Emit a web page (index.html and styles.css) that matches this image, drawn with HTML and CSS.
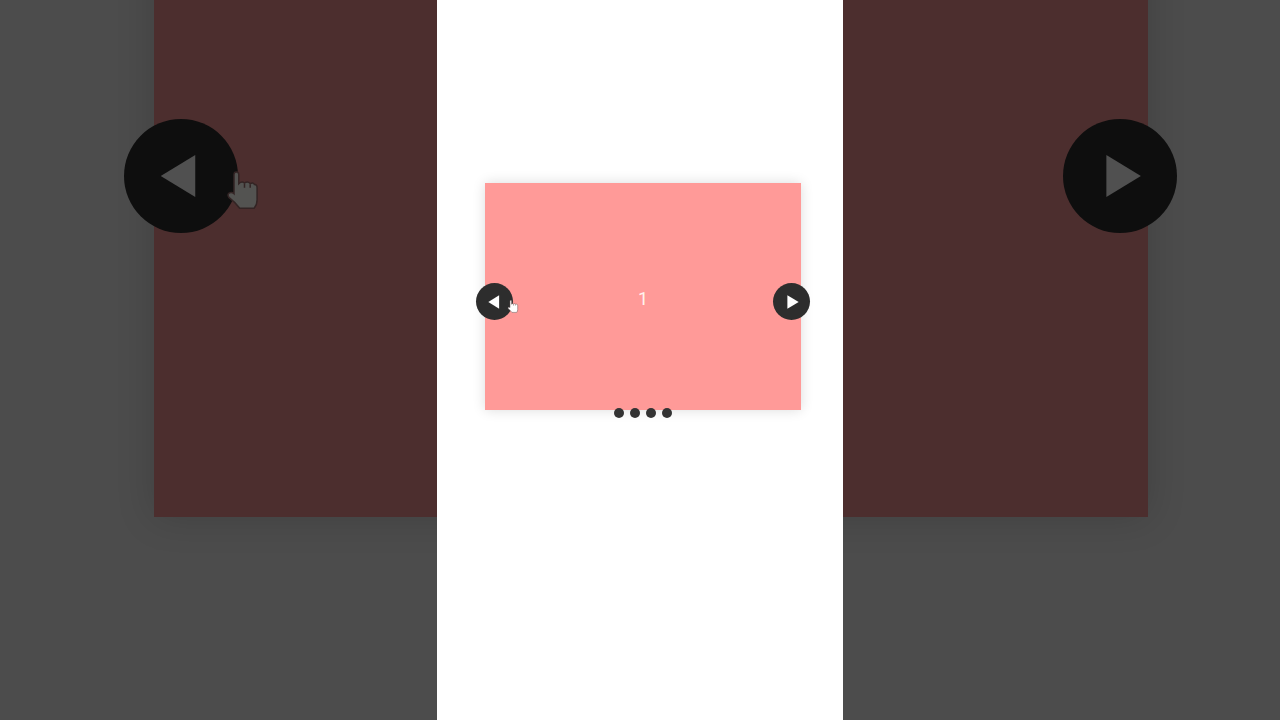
FILE: index.html
```html
<!DOCTYPE html>
<html lang="en">
<head>
  <meta charset="UTF-8">
  <meta name="viewport" content="width=device-width, initial-scale=1">
  <title>Carousel</title>
  <link rel="stylesheet" href="styles.css">
</head>
<body>
  <!-- dimmed large carousel behind the phone panel -->
  <div class="backdrop" aria-hidden="true">
    <div class="carousel carousel-large">
      <div class="slide"></div>
      <button class="arrow prev" tabindex="-1">
        <svg viewBox="0 0 36 36"><path d="M11.6 18 22.5 11.4V24.6Z"/></svg>
      </button>
      <button class="arrow next" tabindex="-1">
        <svg viewBox="0 0 36 36"><path d="M24.6 18 13.7 11.4V24.6Z"/></svg>
      </button>
      <svg class="hand" viewBox="0 0 12 16">
        <path d="M3 9.6V3.2Q3 2.3 3.8 2.3T4.6 3.2V6.2Q5.6 5.2 6.5 6 7.6 5.2 8.4 6.2 9.4 5.6 9.8 6.5 10.7 6.4 10.7 7.6V11.6Q10.7 13.2 9.7 14.4H4.9Q3.6 12.6 1.3 10.8 .6 9.8 1.5 9.3 2.3 9 3 9.6Z"/>
        <path d="M6.5 6.2V7.6M8.4 6.4V7.6"/>
      </svg>
    </div>
  </div>

  <main class="panel">
    <div class="carousel">
      <div class="slide">1</div>
      <button class="arrow prev" aria-label="Previous">
        <svg viewBox="0 0 36 36"><path d="M12 18.4 22.5 11.8V25Z"/></svg>
      </button>
      <button class="arrow next" aria-label="Next">
        <svg viewBox="0 0 36 36"><path d="M25 18.4 14 11.8V25Z"/></svg>
      </button>
      <div class="dots">
        <button class="dot" aria-label="Slide 1"></button>
        <button class="dot" aria-label="Slide 2"></button>
        <button class="dot" aria-label="Slide 3"></button>
        <button class="dot" aria-label="Slide 4"></button>
      </div>
      <svg class="hand" viewBox="0 0 12 16">
        <path d="M3 9.6V3.2Q3 2.3 3.8 2.3T4.6 3.2V6.2Q5.6 5.2 6.5 6 7.6 5.2 8.4 6.2 9.4 5.6 9.8 6.5 10.7 6.4 10.7 7.6V11.6Q10.7 13.2 9.7 14.4H4.9Q3.6 12.6 1.3 10.8 .6 9.8 1.5 9.3 2.3 9 3 9.6Z"/>
        <path d="M6.5 6.2V7.6M8.4 6.4V7.6"/>
      </svg>
    </div>
  </main>
</body>
</html>
```
FILE: styles.css
```css
* {
  box-sizing: border-box;
}
body {
  margin: 0;
  min-height: 100vh;
  display: flex;
  justify-content: center;
  position: relative;
  overflow: hidden;
  background: #4c4c4c;
  font-family: Roboto, Arial, sans-serif;
}

/* dimmed copy */
.backdrop {
  position: absolute;
  inset: 0;
  display: flex;
  justify-content: center;
  align-items: flex-start;
  overflow: hidden;
}

/* phone panel */
.panel {
  position: relative;
  width: 406px;
  min-height: 100vh;
  padding: 183px 42px 0 48px;
  background: #fff;
}

.carousel {
  position: relative;
  height: 227px;
}
.slide {
  display: flex;
  justify-content: center;
  align-items: center;
  height: 100%;
  padding-top: 4px;
  background: #ff9a98;
  box-shadow: 0 0 12px rgba(0,0,0,0.14);
  color: #fff3ee;
  font-size: 18px;
}
.arrow {
  position: absolute;
  top: 100px;
  width: 37px;
  height: 37px;
  padding: 0;
  border: none;
  border-radius: 50%;
  background: #2d2d2d;
  cursor: pointer;
}
.arrow svg {
  display: block;
  width: 100%;
  fill: #fff;
}
.prev { left: -9px; }
.next { right: -9px; }

.dots {
  position: absolute;
  left: 0;
  right: 0;
  bottom: -8px;
  display: flex;
  justify-content: center;
  gap: 6px;
}
.dot {
  width: 10px;
  height: 10px;
  padding: 0;
  border: none;
  border-radius: 50%;
  background: #333;
  cursor: pointer;
}

.hand {
  position: absolute;
  top: 115px;
  left: 22px;
  width: 12px;
  height: 16px;
  fill: #fff;
  stroke: #655;
  stroke-width: 0.5;
}

.carousel-large {
  flex: none;
  width: 994px;
  height: 713px;
  margin: -196px 0 0 22px;
}
.carousel-large .slide {
  background: #4c2e2e;
  box-shadow: 0 0 36px rgba(0,0,0,0.16);
}
.carousel-large .arrow {
  top: 315px;
  width: 114px;
  height: 114px;
  background: #0e0e0e;
}
.carousel-large .prev { left: -30px; }
.carousel-large .next { right: -29px; }
.carousel-large .arrow svg {
  fill: #505050;
}
.carousel-large .hand {
  top: 361px;
  left: 71px;
  width: 36px;
  height: 48px;
  fill: #535351;
  stroke: #332424;
}
```
